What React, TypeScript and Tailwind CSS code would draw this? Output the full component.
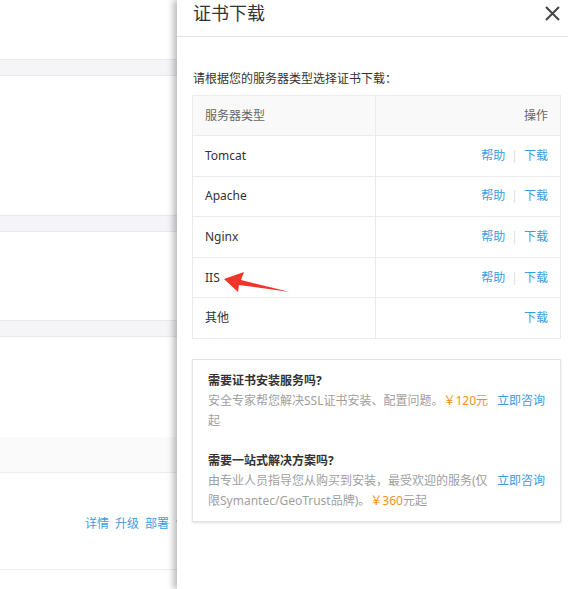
const servers = [
  { name: "Tomcat", help: true },
  { name: "Apache", help: true },
  { name: "Nginx", help: true },
  { name: "IIS", help: true },
  { name: "其他", help: false },
];

const font = { fontFamily: '"Noto Sans", "Noto Sans CJK SC", sans-serif' };

function PageBand({ tall }: { tall?: boolean }) {
  return (
    <div
      className={
        tall
          ? "h-[36px] bg-[#fafafb] border-b border-[#ececef]"
          : "h-[17px] bg-[#f5f5f8] border-y border-[#e9e9ee]"
      }
    />
  );
}

function ServerRow({ name, help }: { name: string; help: boolean }) {
  return (
    <div className="flex h-[40.6px] border-b border-[#ebebeb] text-[12px]">
      <div className="w-[183px] flex items-center pl-[12px] text-[#333] border-r border-[#ebebeb]">
        {name}
      </div>
      <div className="flex-1 flex items-center justify-end pr-[12px] text-[#3a9de2]">
        {help && (
          <>
            <span>帮助</span>
            <span className="mx-[6px] text-[#dcdcdc]">|</span>
          </>
        )}
        <span>下载</span>
      </div>
    </div>
  );
}

export default function App() {
  return (
    <div className="relative w-[568px] h-[589px] overflow-hidden bg-white" style={font}>
      {/* page behind the drawer */}
      <div className="flex flex-col">
        <div className="h-[59px]" />
        <PageBand />
        <div className="h-[139px]" />
        <PageBand />
        <div className="h-[88px]" />
        <PageBand />
        <div className="h-[100px]" />
        <PageBand tall />
        <div className="h-[96px] flex items-center pt-[6px] pl-[85px] gap-[6px] text-[12px] text-[#3a9de2]">
          <span>详情</span>
          <span>升级</span>
          <span>部署</span>
          <span className="text-[10px]">∨</span>
        </div>
        <div className="border-t border-[#ececef]" />
      </div>

      {/* drawer */}
      <div className="absolute left-[177px] top-0 bottom-0 w-[400px] bg-white shadow-[-4px_0_6px_rgba(0,0,0,0.25)] flex flex-col">
        <div className="h-[37px] border-b border-[#e3e3e3] flex items-start justify-between pl-[16px] pr-[17px]">
          <span className="text-[18px] leading-[27px] text-[#333]">证书下载</span>
          <svg className="mt-[6px]" width="15" height="15" viewBox="0 0 15 15">
            <path d="M1 1 L14 14 M14 1 L1 14" stroke="#444" strokeWidth="2" fill="none" />
          </svg>
        </div>

        <div className="pl-[15px] pt-[32px] w-[384px]">
          <p className="pl-[1px] text-[12px] leading-[20px] text-[#333]">请根据您的服务器类型选择证书下载：</p>

          <div className="mt-[6px] border border-[#ebebeb] border-b-0">
            <div className="flex h-[40px] border-b border-[#ebebeb] bg-[#f9f9fa] text-[12px] text-[#666]">
              <div className="w-[183px] flex items-center pl-[12px] border-r border-[#ebebeb]">服务器类型</div>
              <div className="flex-1 flex items-center justify-end pr-[12px]">操作</div>
            </div>
            {servers.map((s) => (
              <ServerRow key={s.name} name={s.name} help={s.help} />
            ))}
          </div>

          <div className="mt-[20px] border border-[#e3e3e3] shadow-[0_1px_2px_rgba(0,0,0,0.12)] pl-[15px] pr-[15px] pt-[11px] pb-[10px] text-[12px] leading-[20px]">
            <div className="flex">
              <div className="w-[289px]">
                <p className="font-bold text-[#333]">需要证书安装服务吗?</p>
                <p className="text-[#a0a0a0]">
                  安全专家帮您解决SSL证书安装、配置问题。<span className="text-[#f0901e]">￥120元</span>起
                </p>
              </div>
              <span className="ml-auto mt-[20px] text-[#3a9de2]">立即咨询</span>
            </div>
            <div className="flex mt-[20px]">
              <div className="w-[289px]">
                <p className="font-bold text-[#333]">需要一站式解决方案吗?</p>
                <p className="text-[#a0a0a0]">
                  由专业人员指导您从购买到安装，最受欢迎的服务(仅限Symantec/GeoTrust品牌)。<span className="text-[#f0901e]">￥360</span>元起
                </p>
              </div>
              <span className="ml-auto mt-[20px] text-[#3a9de2]">立即咨询</span>
            </div>
          </div>
        </div>
      </div>

      {/* red arrow annotation */}
      <svg className="absolute left-0 top-0 pointer-events-none" width="568" height="589">
        <polygon points="224,279 244,272 241,280 290,292 239,285 238,292" fill="#f2352b" />
      </svg>
    </div>
  );
}
